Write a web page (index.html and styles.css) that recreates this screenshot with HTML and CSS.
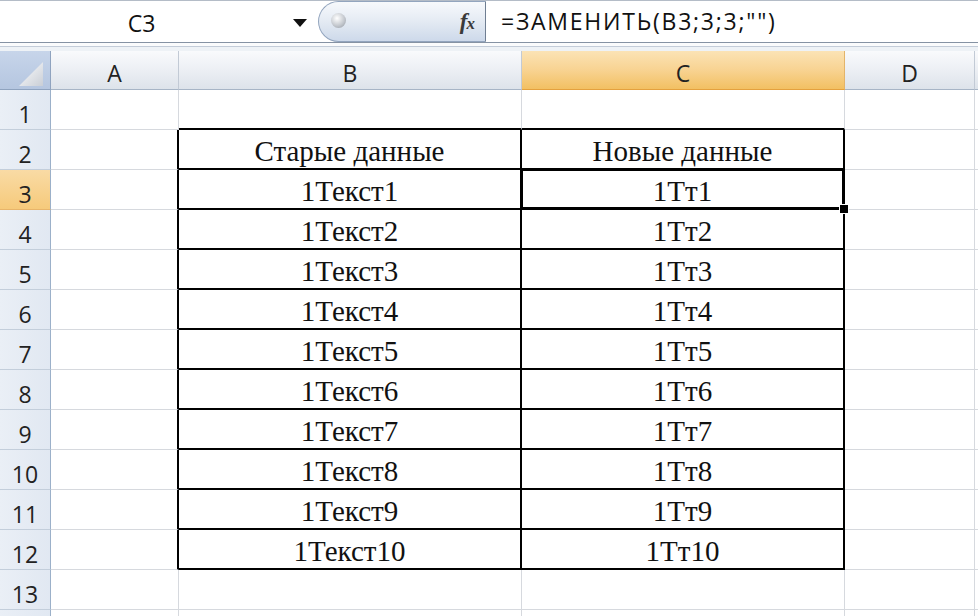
FILE: index.html
```html
<!DOCTYPE html>
<html lang="ru">
<head>
<meta charset="utf-8">
<title>ЗАМЕНИТЬ</title>
<link rel="stylesheet" href="styles.css">
</head>
<body>
<div class="fbar">
  <div class="namebox"><span class="name">C3</span><span class="arrow"></span></div>
  <div class="pill"><span class="knob"></span><span class="fx">f<span class="fxx">x</span></span></div>
  <div class="formula">=ЗАМЕНИТЬ(B3;3;3;"")</div>
</div>
<div class="sep"></div>
<div class="sheet">
  <div class="corner"><svg class="tri" width="24" height="24" viewBox="0 0 24 24"><defs><linearGradient id="g" x1="0" y1="0" x2="1" y2="1"><stop offset="0" stop-color="#ffffff"/><stop offset="1" stop-color="#c9ced6"/></linearGradient></defs><polygon points="0,24 24,0 24,24" fill="url(#g)"/></svg></div>
  <div class="ch">A</div><div class="ch">B</div><div class="ch sel">C</div><div class="ch">D</div><div class="ch"></div>

  <div class="rh">1</div><div class="c"></div><div class="c tb"></div><div class="c tb"></div><div class="c"></div><div class="c"></div>
  <div class="rh">2</div><div class="c tr"></div><div class="c tb tr">Старые данные</div><div class="c tb tr">Новые данные</div><div class="c"></div><div class="c"></div>
  <div class="rh sel">3</div><div class="c tr"></div><div class="c tb tr">1Текст1</div><div class="c tb tr active">1Тт1</div><div class="c"></div><div class="c"></div>
  <div class="rh">4</div><div class="c tr"></div><div class="c tb tr">1Текст2</div><div class="c tb tr">1Тт2</div><div class="c"></div><div class="c"></div>
  <div class="rh">5</div><div class="c tr"></div><div class="c tb tr">1Текст3</div><div class="c tb tr">1Тт3</div><div class="c"></div><div class="c"></div>
  <div class="rh">6</div><div class="c tr"></div><div class="c tb tr">1Текст4</div><div class="c tb tr">1Тт4</div><div class="c"></div><div class="c"></div>
  <div class="rh">7</div><div class="c tr"></div><div class="c tb tr">1Текст5</div><div class="c tb tr">1Тт5</div><div class="c"></div><div class="c"></div>
  <div class="rh">8</div><div class="c tr"></div><div class="c tb tr">1Текст6</div><div class="c tb tr">1Тт6</div><div class="c"></div><div class="c"></div>
  <div class="rh">9</div><div class="c tr"></div><div class="c tb tr">1Текст7</div><div class="c tb tr">1Тт7</div><div class="c"></div><div class="c"></div>
  <div class="rh">10</div><div class="c tr"></div><div class="c tb tr">1Текст8</div><div class="c tb tr">1Тт8</div><div class="c"></div><div class="c"></div>
  <div class="rh">11</div><div class="c tr"></div><div class="c tb tr">1Текст9</div><div class="c tb tr">1Тт9</div><div class="c"></div><div class="c"></div>
  <div class="rh">12</div><div class="c tr"></div><div class="c tb tr">1Текст10</div><div class="c tb tr">1Тт10</div><div class="c"></div><div class="c"></div>
  <div class="rh">13</div><div class="c"></div><div class="c"></div><div class="c"></div><div class="c"></div><div class="c"></div>
  <div class="rh"></div><div class="c"></div><div class="c"></div><div class="c"></div><div class="c"></div><div class="c"></div>
</div>
</body>
</html>
```

FILE: styles.css
```css
* { box-sizing: border-box; margin: 0; padding: 0; }
html, body { width: 978px; height: 616px; overflow: hidden; background: #fff; }
body { font-family: "Open Sans", "DejaVu Sans", sans-serif; color: #1a1a1a; }

.fbar {
  display: flex;
  height: 43px;
  border-top: 1px solid #b4bcc7;
  border-bottom: 1px solid #8592a3;
  background: #fff;
}
.namebox { width: 318px; display: flex; align-items: center; }
.name { width: 283px; text-align: center; font-size: 23px; color: #111; padding-top: 2px; }
.arrow {
  width: 0; height: 0;
  border-left: 7px solid transparent;
  border-right: 7px solid transparent;
  border-top: 8px solid #111;
  margin-left: 10px;
  margin-top: 2px;
}
.pill {
  width: 168px;
  border: 1px solid #93a5be;
  border-right: 1px solid #6f7e92;
  border-radius: 21px 0 0 21px;
  background: linear-gradient(#f7f9fc, #e6ecf4 45%, #cdd9ea);
  display: flex;
  align-items: center;
  justify-content: space-between;
  padding: 0 11px 0 12px;
}
.knob {
  width: 15px; height: 15px; border-radius: 50%;
  background: radial-gradient(circle at 40% 35%, #ffffff 0, #c5c9cf 55%, #8e959e 100%);
  margin-top: -3px;
}
.fx {
  font-family: "Liberation Serif", serif;
  font-style: italic;
  font-weight: bold;
  font-size: 23px;
  color: #3a3a3a;
  letter-spacing: -1px;
}
.fxx { font-size: 17px; }
.formula {
  flex: 1;
  padding-left: 15px;
  font-size: 23px;
  letter-spacing: 1.75px;
  line-height: 40px;
  color: #111;
}

.sep {
  height: 8px;
  background: linear-gradient(to bottom, #fafbfc 0, #fafbfc 3px, #c3ccd8 3px, #c3ccd8 4px, #eef2f6 4px);
}

.sheet {
  display: grid;
  grid-template-columns: 51px 128px 343px 323px 130px 60px;
  grid-template-rows: 39px repeat(14, 40px);
  width: 978px;
  overflow: hidden;
}
.corner {
  background: linear-gradient(#c7d5ea, #b5c6e0);
  border-right: 1px solid #8fa3bf;
  border-bottom: 1px solid #8fa3bf;
  display: flex;
  align-items: flex-end;
  justify-content: flex-end;
  padding: 0 7px 3px 0;
}
.ch {
  background: linear-gradient(#f9fafc, #eceff4 50%, #dde3ea);
  border-right: 1px solid #c2cad5;
  border-bottom: 1px solid #a7b5c6;
  display: flex;
  align-items: center;
  justify-content: center;
  font-size: 23px;
  color: #222;
  padding-top: 6px;
}
.ch.sel {
  background: linear-gradient(#fbe3b5, #f8d392 50%, #f2c062);
  border-bottom-color: #e4a13e;
  border-right-color: #e3b46a;
}
.rh {
  background: linear-gradient(90deg, #eaeff6, #e1e8f2);
  border-right: 1px solid #9bb0c9;
  border-bottom: 1px solid #c3cedb;
  display: flex;
  align-items: center;
  justify-content: center;
  font-size: 23px;
  color: #222;
  padding-top: 8px;
}
.rh.sel { background: linear-gradient(#f9dba5, #f6ca7b); border-bottom-color: #e8b56a; }
.c {
  border-right: 1px solid #d6d9de;
  border-bottom: 1px solid #d6d9de;
  display: flex;
  align-items: center;
  justify-content: center;
  font-family: "Liberation Serif", serif;
  font-size: 29px;
  color: #111;
  padding-top: 5px;
  background: #fff;
}
.c.tb { border-bottom: 2px solid #000; }
.c.tr { border-right: 2px solid #000; }
.c.active { position: relative; z-index: 1; }
.c.active::before {
  content: "";
  position: absolute;
  left: -2px; top: -2px; right: -2px; bottom: -2px;
  border: 3px solid #000;
}
.c.active::after {
  content: "";
  position: absolute;
  right: -6px; bottom: -6px;
  width: 8px; height: 8px;
  background: #000;
  border: 1px solid #fff;
}
```
